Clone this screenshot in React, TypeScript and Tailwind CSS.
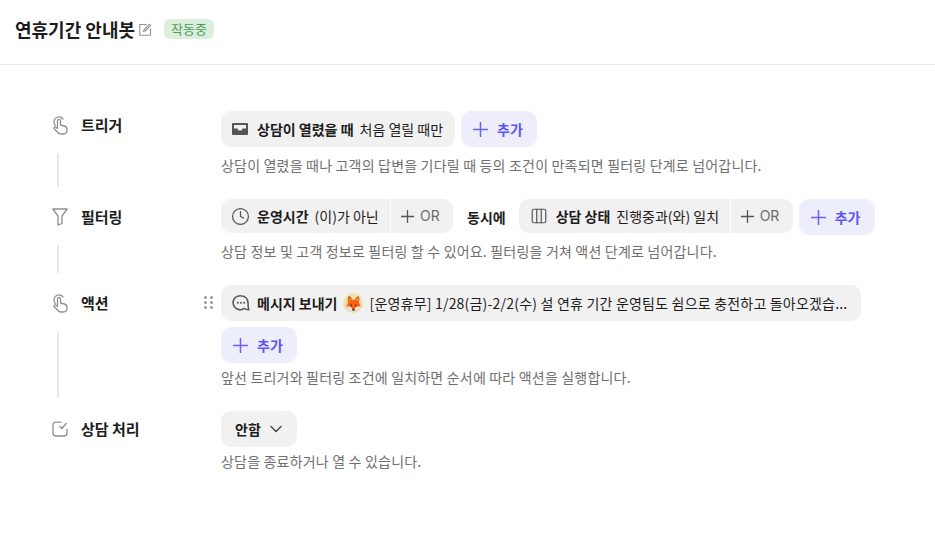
import type { ReactNode } from 'react';
import { ChevronDown, Clock, Columns3 } from 'lucide-react';

function HandIcon() {
  return (
    <svg width="16" height="20" viewBox="0 0 16 20" fill="none" stroke="#8f8f8f" strokeWidth="1.300" strokeLinecap="round" strokeLinejoin="round">
      <path d="M3.200 10.500A5 5 0 0 1 2 7a5 5 0 0 1 9-3" />
      <path d="M5.500 12.500V5.800a1.500 1.500 0 0 1 3 0V10l3.800 1c1.600.4 2.700 1.500 2.700 3.200V15c0 2.400-1.700 4-4 4H9c-1.400 0-2.400-.5-3.200-1.500L2.200 13.800c-.8-1.100.6-2.400 1.700-1.600l1.600 1.300" />
    </svg>
  );
}

function FilterIcon() {
  return (
    <svg width="16" height="18" viewBox="0 0 16 18" fill="none" stroke="#8f8f8f" strokeWidth="1.300" strokeLinejoin="round">
      <path d="M.8 1h14.400L10 8v7.500L6 17V8z" />
    </svg>
  );
}

function HandledIcon() {
  return (
    <svg width="16" height="16" viewBox="0 0 16 16" fill="none" stroke="#8f8f8f" strokeWidth="1.300" strokeLinecap="round" strokeLinejoin="round">
      <path d="M9 1.200H4a3 3 0 0 0-3 3V12a3 3 0 0 0 3 3h8a3 3 0 0 0 3-3V8.500" />
      <path d="M8 5.500 10 7.500l4-5" />
    </svg>
  );
}

function InboxIcon() {
  return (
    <svg width="18" height="18" viewBox="0 0 18 18" className="shrink-0">
      <path fill="#555" fillRule="evenodd" d="M2 3h14a1 1 0 0 1 1 1v10a1 1 0 0 1-1 1H2a1 1 0 0 1-1-1V4a1 1 0 0 1 1-1zm1 2v3.500h3.500l1 2h3l1-2H15V5z" />
    </svg>
  );
}

function ChatIcon() {
  return (
    <svg width="18" height="18" viewBox="0 0 18 18" fill="none" className="shrink-0">
      <path stroke="#555" strokeWidth="1.500" strokeLinejoin="round" d="M9 1.700a7 7 0 0 1 7 7c0 2-.1 4.500.8 7.100-2-.2-3.500-.8-4.600-1.500A7 7 0 1 1 9 1.700z" />
      <circle cx="5.800" cy="8.700" r="1" fill="#555" />
      <circle cx="9" cy="8.700" r="1" fill="#555" />
      <circle cx="12.200" cy="8.700" r="1" fill="#555" />
    </svg>
  );
}

function EditIcon() {
  return (
    <svg width="13" height="13" viewBox="0 0 13 13" fill="none" stroke="#949494" strokeWidth="1.100">
      <path d="M7.500 1.500H.8v10.700h10.700V5.500" />
      <path d="M4.500 8.500 5 6.800 10.500 1.200l1.200 1.200L6.200 8z" />
    </svg>
  );
}

function PlusMark({ size, color }: { size: number; color: string }) {
  return (
    <svg width={size} height={size} viewBox="0 0 16 16" className={`shrink-0 ${color}`} stroke="currentColor" strokeWidth="1.600">
      <path d="M8 0v16M0 8h16" />
    </svg>
  );
}

function AddButton() {
  return (
    <button className="flex h-9 w-[76px] items-center gap-[9px] rounded-[10px] bg-[#eeedfc] pl-3 text-[14px] font-bold text-[#5e56f0]">
      <PlusMark size={15} color="text-[#6a63f0]" />
      <span>추가</span>
    </button>
  );
}

function OrButton() {
  return (
    <div className="flex h-[34px] w-[63px] items-center gap-[6px] border-l border-white pl-[10px] text-[14px] text-[#6b6b6b]">
      <PlusMark size={13} color="text-[#555]" />
      <span className="font-['Inter',sans-serif] text-[14px] leading-[34px]">OR</span>
    </div>
  );
}

function StepLabel({ icon, label, line, first }: { icon: ReactNode; label: string; line?: string; first?: boolean }) {
  return (
    <div className={`flex w-[169px] shrink-0 flex-col ${first ? '-mt-1' : ''}`}>
      <div className="flex h-9 items-center">
        <div className="flex w-4 justify-center">{icon}</div>
        <span className="ml-[13px] text-[15px] font-bold text-[#1c1c1c]">{label}</span>
      </div>
      {line && <div className={`ml-[5px] mt-[10px] w-0.5 bg-[#e8e8e8] ${line}`} />}
    </div>
  );
}

function Hint({ children, gap }: { children: string; gap: string }) {
  return <p className={`${gap} text-[14px] leading-[20px] tracking-[0.19px] text-[#6f6f6f]`}>{children}</p>;
}

export default function App() {
  return (
    <div className="h-[549px] w-[935px] overflow-hidden bg-white font-['Noto_Sans_CJK_KR','Noto_Sans',sans-serif]">
      <header className="flex h-[65px] items-center border-b border-[#e8e8e8] pb-[6px] pl-[15px]">
        <h1 className="text-[18px] font-bold text-[#1c1c1c]">연휴기간 안내봇</h1>
        <span className="ml-[4px]"><EditIcon /></span>
        <span className="ml-[12px] flex h-5 w-[50px] items-center justify-center rounded-md bg-[#dcefdc] text-[13px] text-[#4f9a5c]">작동중</span>
      </header>

      <main className="flex flex-col pl-[52px] pt-[46px]">
        <section className="flex">
          <StepLabel first icon={<HandIcon />} label="트리거" line="h-[34px]" />
          <div>
            <div className="flex gap-[6px]">
              <div className="flex h-9 w-[234px] items-center rounded-[10px] bg-[#f1f1f1] pl-[10px] text-[14px] text-[#1c1c1c]">
                <InboxIcon />
                <b className="ml-[8px] font-bold">상담이 열렸을 때</b>
                <span className="ml-[6px] whitespace-nowrap">처음 열릴 때만</span>
              </div>
              <AddButton />
            </div>
            <Hint gap="mt-2">상담이 열렸을 때나 고객의 답변을 기다릴 때 등의 조건이 만족되면 필터링 단계로 넘어갑니다.</Hint>
          </div>
        </section>

        <section className="mt-3 flex">
          <StepLabel icon={<FilterIcon />} label="필터링" line="h-[28px]" />
          <div>
            <div className="flex items-start">
              <div className="flex h-[34px] w-[232px] items-center rounded-[10px] bg-[#f1f1f1] pl-[10px] text-[14px] text-[#1c1c1c]">
                <Clock size={19} strokeWidth={1.600} className="shrink-0 text-[#555]" />
                <b className="ml-[7px] font-bold">운영시간</b>
                <span className="ml-[6px] mr-auto whitespace-nowrap">(이)가 아닌</span>
                <OrButton />
              </div>
              <b className="ml-[14px] mr-[13px] self-center text-[14px] font-bold leading-[34px] text-[#1c1c1c]">동시에</b>
              <div className="flex h-[34px] w-[274px] items-center rounded-[10px] bg-[#f1f1f1] pl-[11px] text-[14px] text-[#1c1c1c]">
                <Columns3 size={18} strokeWidth={1.600} className="shrink-0 text-[#555]" />
                <b className="ml-[8px] font-bold">상담 상태</b>
                <span className="ml-[6px] mr-auto whitespace-nowrap">진행중과(와) 일치</span>
                <OrButton />
              </div>
              <div className="ml-[6px]"><AddButton /></div>
            </div>
            <Hint gap="mt-[6px]">상담 정보 및 고객 정보로 필터링 할 수 있어요. 필터링을 거쳐 액션 단계로 넘어갑니다.</Hint>
          </div>
        </section>

        <section className="mt-3 flex">
          <StepLabel icon={<HandIcon />} label="액션" line="h-[67px]" />
          <div className="relative">
            <div className="absolute left-[-17px] top-[11px] grid grid-cols-2 gap-x-[3px] gap-y-[2px]">
              {[0, 1, 2, 3, 4, 5].map((i) => (
                <span key={i} className="h-[3px] w-[3px] rounded-full bg-[#9a9a9a]" />
              ))}
            </div>
            <div className="flex h-9 w-[640px] items-center rounded-[10px] bg-[#f1f1f1] px-[11px] text-[14px] text-[#1c1c1c]">
              <ChatIcon />
              <b className="ml-[7px] whitespace-nowrap font-bold">메시지 보내기</b>
              <span className="ml-[6px] flex h-5 w-5 shrink-0 items-center justify-center rounded-full bg-[#f6dfa8] text-[15px]">🦊</span>
              <span className="ml-[6px] truncate tracking-[0.2px]">[운영휴무] 1/28(금)-2/2(수) 설 연휴 기간 운영팀도 쉼으로 충전하고 돌아오겠습...</span>
            </div>
            <div className="mt-[6px]"><AddButton /></div>
            <Hint gap="mt-1">앞선 트리거와 필터링 조건에 일치하면 순서에 따라 액션을 실행합니다.</Hint>
          </div>
        </section>

        <section className="mt-[13px] flex">
          <StepLabel icon={<HandledIcon />} label="상담 처리" />
          <div>
            <button className="flex h-9 w-[76px] items-center gap-[5px] rounded-[10px] bg-[#f1f1f1] pl-[14px] text-[14px] font-bold text-[#1c1c1c]">
              <span>안함</span>
              <ChevronDown size={20} strokeWidth={1.800} className="text-[#4a4a4a]" />
            </button>
            <Hint gap="mt-1">상담을 종료하거나 열 수 있습니다.</Hint>
          </div>
        </section>
      </main>
    </div>
  );
}
